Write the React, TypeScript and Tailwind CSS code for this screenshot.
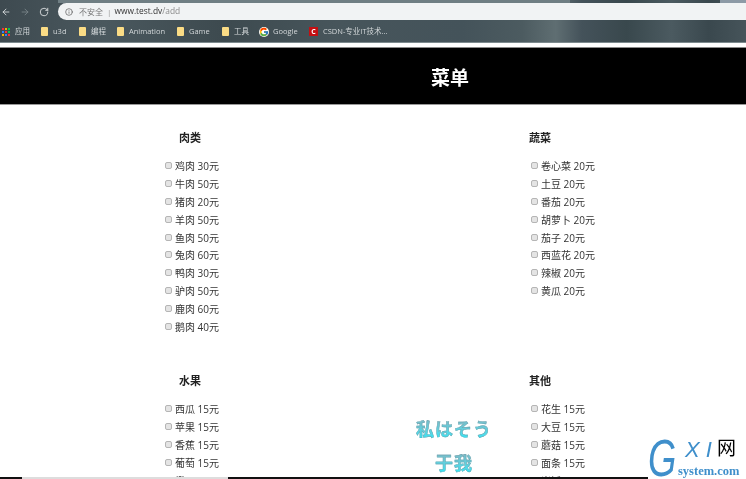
import { FcGoogle } from "react-icons/fc";
import { ArrowLeft, ArrowRight, RotateCw, Info } from "lucide-react";

const menus = [
  {
    title: "肉类",
    offset: "ml-[14px]",
    items: ["鸡肉 30元", "牛肉 50元", "猪肉 20元", "羊肉 50元", "鱼肉 50元", "兔肉 60元", "鸭肉 30元", "驴肉 50元", "鹿肉 60元", "鹅肉 40元"],
  },
  {
    title: "蔬菜",
    offset: "-ml-[2px]",
    items: ["卷心菜 20元", "土豆 20元", "番茄 20元", "胡萝卜 20元", "茄子 20元", "西蓝花 20元", "辣椒 20元", "黄瓜 20元"],
  },
  {
    title: "水果",
    offset: "ml-[14px]",
    items: ["西瓜 15元", "苹果 15元", "香蕉 15元", "葡萄 15元", "橙子 15元"],
  },
  {
    title: "其他",
    offset: "-ml-[2px]",
    items: ["花生 15元", "大豆 15元", "蘑菇 15元", "面条 15元", "米饭 15元"],
  },
];

const bookmarks = [
  { label: "u3d", width: "w-[38px]" },
  { label: "编程", width: "w-[38px]" },
  { label: "Animation", width: "w-[60px]" },
  { label: "Game", width: "w-[45px]" },
  { label: "工具", width: "w-[37px]" },
];

function Folder() {
  return <span className="w-[7px] h-[9px] bg-[#fbdc85] rounded-[1px] shrink-0" />;
}

function AppsIcon() {
  const colors = ["bg-red-500", "bg-yellow-500", "bg-green-500", "bg-blue-500", "bg-red-500", "bg-green-500", "bg-yellow-500", "bg-blue-500", "bg-red-500"];
  return (
    <span className="grid grid-cols-3 gap-px w-[8px] h-[8px] shrink-0">
      {colors.map((c, i) => (
        <span key={i} className={`${c} w-[2px] h-[2px]`} />
      ))}
    </span>
  );
}

function BrowserBar() {
  return (
    <div className="h-[43px] border-b border-[#7d8a8e] bg-[linear-gradient(90deg,#3e4a50_0%,#4a585e_14%,#3d4a4f_30%,#47555b_45%,#44535a_62%,#4c5b60_70%,#5f6e72_74.5%,#44525a_78%,#39484d_84%,#4b5a60_90%,#3a484e_95%,#46545a_100%)] text-[#d2d7d9]">
      <div className="relative h-[21px] pt-[3px] flex items-start">
        <span className="absolute left-[58px] top-0 w-[512px] h-[3px] bg-[#6f7e83]" />
        <span className="absolute left-[720px] top-0 w-[26px] h-[3px] bg-[#8d9aa6]" />
        <div className="w-[58px] h-[17px] flex items-center gap-[9px] pl-[1px] shrink-0">
          <ArrowLeft size={10} color="#dfe3e5" />
          <ArrowRight size={10} color="#7c878c" />
          <RotateCw size={10} color="#e8ebec" />
        </div>
        <div className="flex-1 h-[17px] bg-[#f1f3f4] rounded-l-full flex items-center pl-[7px] text-[8px] text-[#777]">
          <Info size={8} color="#555" />
          <span className="ml-[6px]">不安全</span>
          <span className="ml-[4px] mr-[3px] text-[#999]">|</span>
          <span className="text-[8.4px] text-[#333]">www.test.dv</span>
          <span className="text-[8.4px] text-[#8a8a8a]">/add</span>
        </div>
      </div>
      <div className="h-[21px] flex items-center pl-[2px] text-[7.5px]">
        <div className="w-[39px] flex items-center gap-[5px]">
          <AppsIcon />
          <span>应用</span>
        </div>
        {bookmarks.map((b) => (
          <div key={b.label} className={`${b.width} flex items-center gap-[5px] shrink-0`}>
            <Folder />
            <span>{b.label}</span>
          </div>
        ))}
        <div className="w-[50px] flex items-center gap-[4px]">
          <FcGoogle className="text-[10px] bg-white rounded-full" />
          <span>Google</span>
        </div>
        <div className="flex items-center gap-[5px]">
          <span className="w-[9px] h-[9px] bg-[#c40f12] text-white text-[7px] font-bold flex items-center justify-center leading-none">C</span>
          <span>CSDN-专业IT技术...</span>
        </div>
      </div>
    </div>
  );
}

function Section({ title, offset, items }: { title: string; offset: string; items: string[] }) {
  return (
    <section className="pl-[165px]">
      <h2 className={`${offset} h-[18px] leading-[18px] text-[11px] font-bold text-[#222]`}>{title}</h2>
      <ul className="mt-[11px]">
        {items.map((item) => (
          <li key={item} className="h-[17.8px] flex items-center gap-[3px] text-[10px] text-[#333]">
            <input type="checkbox" className="appearance-none w-[7px] h-[7px] mb-[2px] rounded-[2px] bg-[#e4e4e4] border border-[#b5b5b5]" />
            <span>{item}</span>
          </li>
        ))}
      </ul>
    </section>
  );
}

export default function App() {
  return (
    <div className="relative w-[746px] h-[479px] overflow-hidden bg-white font-['Open_Sans','Noto_Sans_CJK_SC',sans-serif] blur-[0.3px]">
      <BrowserBar />
      <div className="h-[4px] bg-white" />
      <div className="h-[1px] bg-[#8a8a8a]" />
      <header className="h-[57px] bg-black flex items-center justify-center pl-[154px] pt-[4px] border-b border-[#999]">
        <h1 className="text-[19px] font-bold text-white">菜单</h1>
      </header>
      <main className="grid grid-cols-[366px_1fr] pt-[24px]">
        {menus.map((m, i) => (
          <div key={m.title} className={i < 2 ? "h-[243px]" : ""}>
            <Section {...m} />
          </div>
        ))}
      </main>

      <div className="absolute left-[415px] top-[417px] w-[78px] flex flex-col items-center gap-[12px] text-[18px] leading-[22px] font-bold tracking-[1px] font-['Noto_Sans_CJK_JP',sans-serif] [-webkit-text-stroke:0.4px_#6f9aa5]">
        <span className="bg-gradient-to-b from-[#7fb4c0] to-[#27e6f6] bg-clip-text text-transparent whitespace-nowrap">私はそう</span>
        <span className="bg-gradient-to-b from-[#7fb4c0] to-[#27e6f6] bg-clip-text text-transparent whitespace-nowrap">于我</span>
      </div>

      <div className="absolute left-0 right-0 bottom-0 h-[2px] flex">
        <span className="w-[22px] bg-[#111]" />
        <span className="w-[206px] bg-[#ddd]" />
        <span className="w-[420px] bg-[#111]" />
      </div>

      <div className="absolute right-0 bottom-0 w-[98px] h-[44px] bg-white">
        <span className="absolute left-[0px] top-[-3px] text-[52px] leading-[52px] italic text-[#3f8fcb] font-['Liberation_Sans',sans-serif] origin-left scale-x-[0.7]">G</span>
        <span className="absolute left-[37px] top-[3px] text-[22px] leading-[24px] italic text-[#3f8fcb] tracking-[6px] font-['Liberation_Sans',sans-serif]">XI</span>
        <span className="absolute left-[69px] top-[2px] text-[19px] leading-[20px] text-black font-['Noto_Sans_CJK_SC',sans-serif]">网</span>
        <span className="absolute left-[30px] top-[29px] text-[12.5px] leading-[14px] font-bold text-[#3f8fcb] font-['Liberation_Serif',serif]">system.com</span>
      </div>
    </div>
  );
}
